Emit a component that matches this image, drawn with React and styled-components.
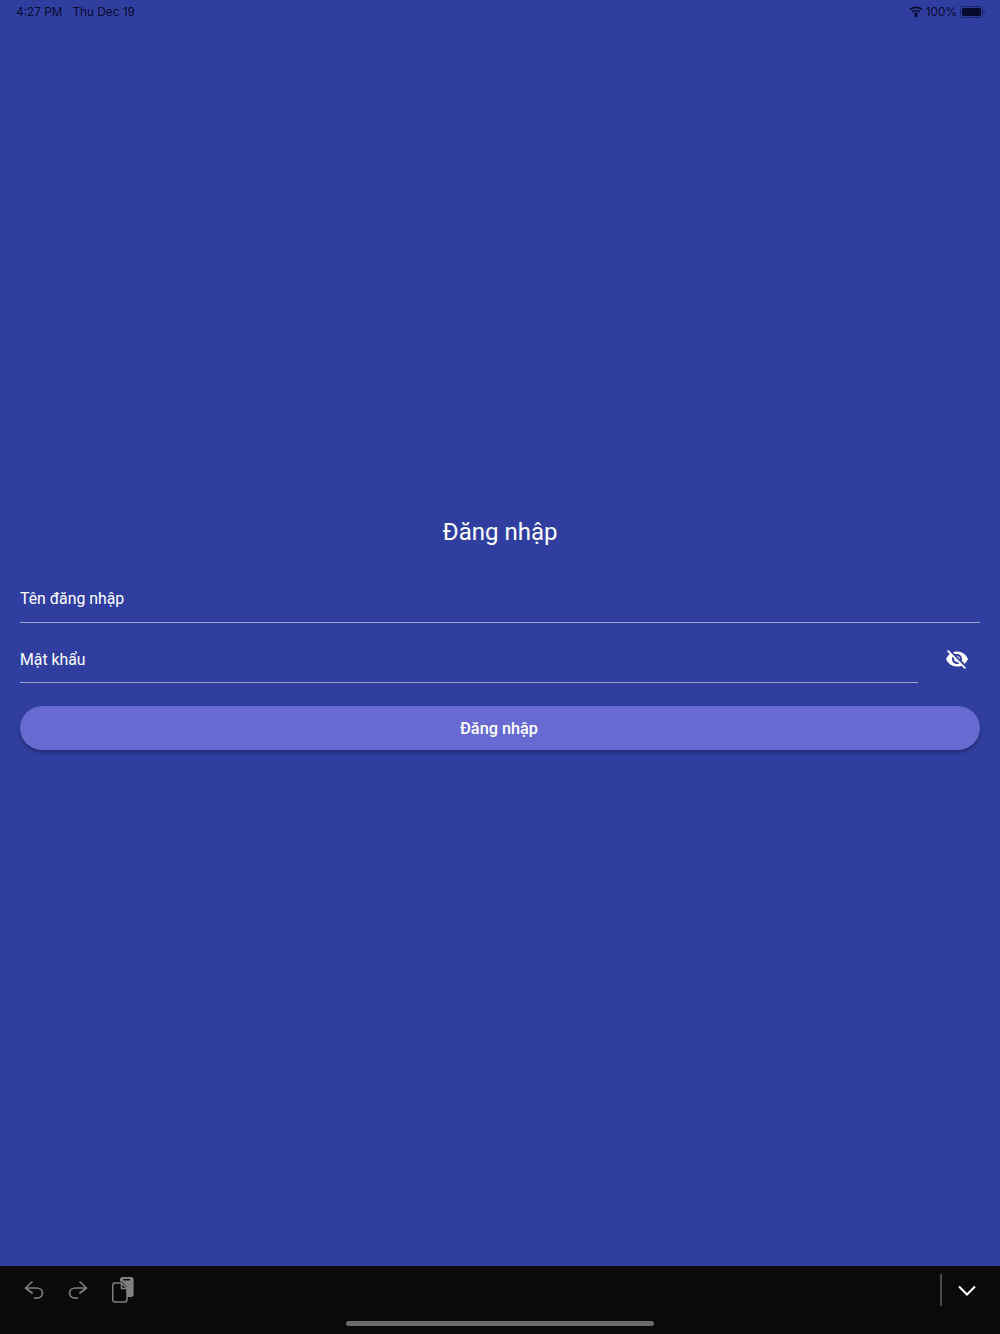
import styled, { createGlobalStyle } from "styled-components";
import { MdVisibilityOff } from "react-icons/md";

const GlobalStyle = createGlobalStyle`
  html, body {
    margin: 0;
    padding: 0;
    background: #303f9f;
  }
  * {
    box-sizing: border-box;
  }
`;

const Page = styled.div`
  width: 1000px;
  height: 1334px;
  display: flex;
  flex-direction: column;
  background: #303f9f;
  font-family: Roboto, "Noto Sans", sans-serif;
  overflow: hidden;
`;

const StatusBar = styled.div`
  height: 23px;
  padding: 0 15px 0 16px;
  display: flex;
  align-items: center;
  justify-content: space-between;
  font-family: Inter, "Liberation Sans", sans-serif;
  font-size: 11.8px;
  color: #070b30;
`;

const StatusGroup = styled.div`
  display: flex;
  align-items: center;
  gap: ${(p) => p.$gap}px;
`;

const Main = styled.main`
  flex: 1;
  padding: 492px 20px 0;
  display: flex;
  flex-direction: column;
`;

const Title = styled.h1`
  margin: 0 0 27px;
  height: 34px;
  line-height: 34px;
  text-align: center;
  font-size: 24px;
  font-weight: 400;
  color: #fff;
`;

const FieldRow = styled.div`
  display: flex;
  align-items: flex-end;
  gap: 18px;
`;

const Field = styled.div`
  flex: 1;
  height: ${(p) => p.$height}px;
  padding-bottom: ${(p) => p.$bottom}px;
  display: flex;
  align-items: flex-end;
  border-bottom: 1px solid #9ca3cc;
  font-size: 15.8px;
  color: #fff;
`;

const Caret = styled.span`
  width: 1px;
  height: 20px;
  margin: 0 -1px -1px 0;
  background: #2a55b0;
`;

const IconButton = styled.div`
  width: 42px;
  height: 42px;
  margin: 0 2px 3px 0;
  display: flex;
  align-items: center;
  justify-content: center;
  color: #fff;
  font-size: 24px;
`;

const SubmitButton = styled.button`
  margin-top: 23px;
  height: 44px;
  padding: 0 2px 0 0;
  border: none;
  border-radius: 22px;
  background: #666ad1;
  box-shadow: 0 2px 4px rgba(0, 0, 0, 0.35);
  color: #fff;
  font-family: inherit;
  font-size: 16.3px;
  font-weight: 500;
`;

const Toolbar = styled.div`
  position: relative;
  height: 68px;
  background: #0a0a0a;
  padding: 8px 24px 0 24px;
  display: flex;
  align-items: flex-start;
  justify-content: space-between;
`;

const ToolGroup = styled.div`
  display: flex;
  align-items: center;
  gap: ${(p) => p.$gap}px;
  height: 32px;
`;

const Divider = styled.div`
  width: 2px;
  height: 32px;
  background: #4a4a4a;
`;

const HomeBar = styled.div`
  position: absolute;
  left: 346px;
  bottom: 8px;
  width: 308px;
  height: 5px;
  border-radius: 3px;
  background: #6b6b6b;
`;

const WifiIcon = () => (
  <svg width="14" height="11" viewBox="0 0 14 11" fill="none" stroke="#070b30" strokeWidth="1.7">
    <path d="M1 3.6C4.4 0.6 9.6 0.6 13 3.6" />
    <path d="M3.2 5.9C5.3 4.1 8.7 4.1 10.8 5.9" />
    <path d="M5.4 8.1C6.3 7.4 7.7 7.4 8.6 8.1" />
    <circle cx="7" cy="9.6" r="0.7" fill="#070b30" />
  </svg>
);

const BatteryIcon = () => (
  <svg width="25" height="12" viewBox="0 0 25 12">
    <rect x="0.5" y="0.5" width="22" height="11" rx="3" fill="none" stroke="#1c2566" />
    <rect x="2" y="2" width="19" height="8" rx="1.5" fill="#070b30" />
    <path d="M23.6 4.2C24.4 4.4 24.8 5 24.8 6C24.8 7 24.4 7.6 23.6 7.8Z" fill="#1c2566" />
  </svg>
);

const UndoIcon = () => (
  <svg width="20" height="20" viewBox="0 0 20 20" fill="none" stroke="#808080" strokeWidth="1.7" strokeLinecap="round" strokeLinejoin="round">
    <path d="M8 2L1.5 8L8 13" />
    <path d="M2 8H12.5C16 8 18.5 10 18.5 13C18.5 16 16 18 13 18H10.5" />
  </svg>
);

const RedoIcon = () => (
  <svg width="20" height="20" viewBox="0 0 20 20" fill="none" stroke="#808080" strokeWidth="1.7" strokeLinecap="round" strokeLinejoin="round">
    <path d="M12 2L18.5 8L12 13" />
    <path d="M18 8H7.5C4 8 1.5 10 1.5 13C1.5 16 4 18 7 18H9.5" />
  </svg>
);

const PasteIcon = () => (
  <svg width="22" height="26" viewBox="0 0 22 26" fill="none">
    <path d="M8 2.5C8 1.1 9 0 10.5 0H19C20.6 0 21.6 1.1 21.6 2.5V17.5C21.6 19 20.6 20 19 20H15V10L10 4.5H8Z" fill="#808080" />
    <rect x="11" y="2" width="7" height="1.6" rx="0.8" fill="#0a0a0a" />
    <path d="M3 6H9.5L15 11.5V22.5C15 24 14 25 12.5 25H3C1.6 25 0.7 24 0.7 22.5V8.5C0.7 7 1.6 6 3 6Z" stroke="#808080" strokeWidth="1.5" fill="#0a0a0a" />
    <path d="M9.5 6V11.5H15" stroke="#808080" strokeWidth="1.5" />
  </svg>
);

const ChevronIcon = () => (
  <svg width="18" height="11" viewBox="0 0 18 11" fill="none" stroke="#fff" strokeWidth="2">
    <path d="M1 1.5L9 9.5L17 1.5" />
  </svg>
);

const App = () => {
  return (
    <>
      <GlobalStyle />
      <Page>
        <StatusBar>
          <StatusGroup $gap={10}>
            <span>4:27 PM</span>
            <span>Thu Dec 19</span>
          </StatusGroup>
          <StatusGroup $gap={3}>
            <WifiIcon />
            <span>100%</span>
            <BatteryIcon />
          </StatusGroup>
        </StatusBar>
        <Main>
          <Title>Đăng nhập</Title>
          <FieldRow>
            <Field $height={47} $bottom={14}>Tên đăng nhập</Field>
          </FieldRow>
          <FieldRow>
            <Field $height={60} $bottom={13}>
              <Caret />
              Mật khẩu
            </Field>
            <IconButton>
              <MdVisibilityOff />
            </IconButton>
          </FieldRow>
          <SubmitButton>Đăng nhập</SubmitButton>
        </Main>
        <Toolbar>
          <ToolGroup $gap={24}>
            <UndoIcon />
            <RedoIcon />
            <PasteIcon />
          </ToolGroup>
          <ToolGroup $gap={16}>
            <Divider />
            <ChevronIcon />
          </ToolGroup>
          <HomeBar />
        </Toolbar>
      </Page>
    </>
  );
};

export default App;
